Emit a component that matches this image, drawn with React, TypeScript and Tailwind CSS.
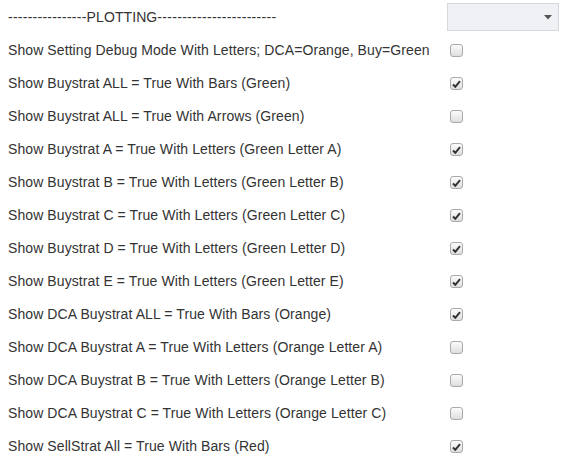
const rows: [string, boolean][] = [
  ['Show Setting Debug Mode With Letters; DCA=Orange, Buy=Green', false],
  ['Show Buystrat ALL = True With Bars (Green)', true],
  ['Show Buystrat ALL = True With Arrows (Green)', false],
  ['Show Buystrat A = True With Letters (Green Letter A)', true],
  ['Show Buystrat B = True With Letters (Green Letter B)', true],
  ['Show Buystrat C = True With Letters (Green Letter C)', true],
  ['Show Buystrat D = True With Letters (Green Letter D)', true],
  ['Show Buystrat E = True With Letters (Green Letter E)', true],
  ['Show DCA Buystrat ALL = True With Bars (Orange)', true],
  ['Show DCA Buystrat A = True With Letters (Orange Letter A)', false],
  ['Show DCA Buystrat B = True With Letters (Orange Letter B)', false],
  ['Show DCA Buystrat C = True With Letters (Orange Letter C)', false],
  ['Show SellStrat All = True With Bars (Red)', true],
];

function Check({ on }: { on: boolean }) {
  return (
    <span className="flex h-[13px] w-[13px] items-center justify-center rounded-[3px] border border-[#a9a9a9] bg-gradient-to-b from-[#fcfcfc] to-[#dedede]">
      {on && (
        <svg width="9" height="8" viewBox="0 0 9 8">
          <path d="M1 4.5 L3.3 6.8 L8 1.2" fill="none" stroke="#333" strokeWidth="2" />
        </svg>
      )}
    </span>
  );
}

export default function App() {
  return (
    <div className="h-[462px] w-[565px] bg-white text-[14px] tracking-[0.09px] text-[#333] font-['Liberation_Sans',Arial,sans-serif]">
      <div className="flex h-[34px] items-center">
        <span className="ml-2 w-[439px]">
          <span className="tracking-[0.25px]">----------------</span>PLOTTING
          <span className="tracking-[0.3px]">------------------------</span>
        </span>
        <div className="flex h-[28px] w-[112px] items-center justify-end border border-[#d5d9de] bg-[#eff1f5] pr-[6px]">
          <svg width="8" height="5" viewBox="0 0 8 5">
            <path d="M0 0 H8 L4 4.5 Z" fill="#555" />
          </svg>
        </div>
      </div>
      {rows.map(([label, on]) => (
        <div key={label} className="flex h-[33px] items-center">
          <span className="ml-2 w-[442px]">{label}</span>
          <Check on={on} />
        </div>
      ))}
    </div>
  );
}
